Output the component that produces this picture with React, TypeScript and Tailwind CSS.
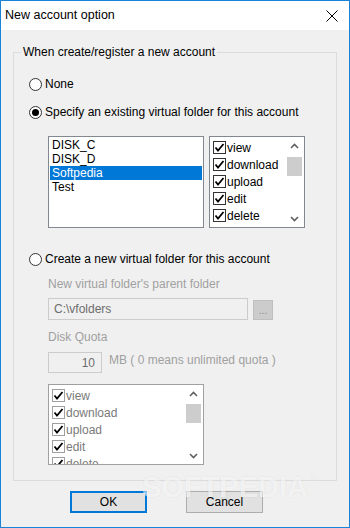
import React from "react";

const font = { fontFamily: '"Liberation Sans", Arial, sans-serif' };

const Check = ({ disabled }: { disabled?: boolean }) => (
  <svg width="13" height="13" viewBox="0 0 13 13" className="shrink-0">
    <rect x="0.5" y="0.5" width="12" height="12" fill="#fff" stroke={disabled ? "#a0a0a0" : "#333"} />
    <path d="M2.5 6.5 L5 9.5 L10.5 3" fill="none" stroke="#000" strokeWidth="1.8" />
  </svg>
);

const Radio = ({ checked }: { checked?: boolean }) => (
  <svg width="13" height="13" viewBox="0 0 13 13" className="shrink-0">
    <circle cx="6.5" cy="6.5" r="6" fill="#fff" stroke="#333" />
    {checked && <circle cx="6.5" cy="6.5" r="3.5" fill="#000" />}
  </svg>
);

const Chevron = ({ up }: { up?: boolean }) => (
  <svg width="9" height="6" viewBox="0 0 9 6">
    <path d={up ? "M1 5 L4.5 1.5 L8 5" : "M1 1 L4.5 4.5 L8 1"} fill="none" stroke="#606060" strokeWidth="1.6" />
  </svg>
);

const perms = ["view", "download", "upload", "edit", "delete"];

const Scrollbar = ({ thumbTop }: { thumbTop: string }) => (
  <div className="flex h-full w-[17px] flex-col bg-white">
    <div className="flex h-[17px] items-center justify-center">
      <Chevron up />
    </div>
    <div className={`${thumbTop} mx-[1px] h-[19px] bg-[#cdcdcd]`}></div>
    <div className="flex-1"></div>
    <div className="flex h-[17px] items-center justify-center">
      <Chevron />
    </div>
  </div>
);

const PermList = ({ disabled }: { disabled?: boolean }) => (
  <div className="flex-1 overflow-hidden pl-[3px] pt-[2px]">
    {perms.map((p) => (
      <div key={p} className="flex h-[17px] items-center gap-[1px]">
        <Check disabled={disabled} />
        <span className={disabled ? "text-[#7a7a7a]" : "text-black"}>{p}</span>
      </div>
    ))}
  </div>
);

export default function App() {
  return (
    <div
      className="relative flex h-[528px] w-[350px] flex-col overflow-hidden border border-[#1883d7] bg-[#f0f0f0] text-[12px] text-black"
      style={font}
    >
      <div className="flex h-[29px] shrink-0 items-center justify-between bg-white pl-[4px] pr-[11px]">
        <span className="text-[12.5px]">New account option</span>
        <svg width="12" height="12" viewBox="0 0 12 12">
          <path d="M0.5 0.5 L11.5 11.5 M11.5 0.5 L0.5 11.5" stroke="#000" strokeWidth="1" />
        </svg>
      </div>

      <fieldset className="mx-[12px] mt-[14px] border border-[#dcdcdc] pb-[15px] pl-[15px]">
        <legend className="-ml-[8px] px-[2px] leading-[16px]">When create/register a new account</legend>

        <div className="mt-[16px] flex h-[16px] items-center gap-[3px]">
          <Radio />
          <span>None</span>
        </div>
        <div className="mt-[12px] flex h-[16px] items-center gap-[3px]">
          <Radio checked />
          <span>Specify an existing virtual folder for this account</span>
        </div>

        <div className="ml-[19px] mt-[16px] flex h-[92px] gap-[5px]">
          <div className="w-[156px] border border-[#828790] bg-white p-[1px]">
            <div className="h-[14px] pl-[2px] leading-[14px]">DISK_C</div>
            <div className="h-[14px] pl-[2px] leading-[14px]">DISK_D</div>
            <div className="h-[14px] bg-[#0078d7] pl-[2px] leading-[14px] text-white">Softpedia</div>
            <div className="h-[14px] pl-[2px] leading-[14px]">Test</div>
          </div>
          <div className="flex w-[96px] border border-[#828790] bg-white">
            <PermList />
            <div className="pr-[1px]">
              <Scrollbar thumbTop="mt-[3px]" />
            </div>
          </div>
        </div>

        <div className="mt-[23px] flex h-[16px] items-center gap-[3px]">
          <Radio />
          <span>Create a new virtual folder for this account</span>
        </div>

        <div className="ml-[19px]">
          <div className="mt-[9px] h-[16px] leading-[16px] text-[#a0a0a0]">New virtual folder's parent folder</div>
          <div className="mt-[6px] flex gap-[5px]">
            <div className="flex h-[22px] w-[200px] items-center border border-[#cccccc] bg-[#f0f0f0] pl-[5px] text-[#6d6d6d]">
              C:\vfolders
            </div>
            <div className="mt-[2px] flex h-[20px] w-[20px] items-center justify-center border border-[#bfbfbf] bg-[#cccccc] text-[10px] text-[#888]">
              ...
            </div>
          </div>

          <div className="mt-[9px] h-[16px] leading-[16px] text-[#a0a0a0]">Disk Quota</div>
          <div className="mt-[7px] flex items-center gap-[7px]">
            <div className="flex h-[21px] w-[54px] items-center justify-end border border-[#cccccc] bg-[#f0f0f0] pr-[6px] text-[#6d6d6d]">
              10
            </div>
            <span className="-mt-[6px] text-[#a0a0a0]">MB ( 0 means unlimited quota )</span>
          </div>

          <div className="mt-[11px] flex h-[81px] w-[156px] border border-[#a0a0a0] bg-white">
            <PermList disabled />
            <div className="pr-[1px]">
              <Scrollbar thumbTop="mt-[2px]" />
            </div>
          </div>
        </div>
      </fieldset>

      <div className="mt-[10px] flex gap-[39px] pl-[69px]">
        <div className="flex h-[22px] w-[77px] items-center justify-center border-2 border-[#0078d7] bg-[#e1e1e1]">
          OK
        </div>
        <div className="flex h-[22px] w-[77px] items-center justify-center border border-[#adadad] bg-[#e1e1e1]">
          Cancel
        </div>
      </div>

      <div className="pointer-events-none absolute left-[141px] top-[471px] flex items-start text-[29px] font-bold leading-[30px] text-white/60 [text-shadow:0_0_2px_rgba(0,0,0,0.08)]">
        <span>SOFTPEDIA</span>
        <span className="ml-[2px] text-[9px] leading-[12px]">®</span>
      </div>
    </div>
  );
}
